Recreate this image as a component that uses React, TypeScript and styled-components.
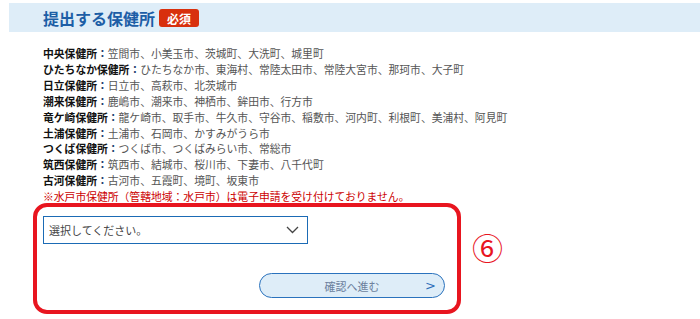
import React from "react";
import styled, { createGlobalStyle } from "styled-components";

const Global = createGlobalStyle`
  html, body { margin: 0; padding: 0; background: #fff; }
  body { font-family: "Noto Sans CJK JP", "Noto Sans", sans-serif; }
  * { box-sizing: border-box; }
`;

const Page = styled.div`
  width: 700px;
  height: 319px;
  padding: 3px 0 0 9px;
  overflow: hidden;
`;

const HeaderBand = styled.div`
  height: 29px;
  background: #deedf8;
  display: flex;
  align-items: center;
  gap: 4px;
  padding-left: 34px;
`;

const Title = styled.h2`
  margin: 0;
  font-size: 16px;
  line-height: 1;
  font-weight: 700;
  color: #1d5ea6;
`;

const Badge = styled.span`
  display: inline-flex;
  align-items: center;
  justify-content: center;
  width: 40px;
  height: 18px;
  background: #d8300d;
  color: #fff;
  font-size: 12px;
  font-weight: 700;
  border-radius: 3px;
  margin-top: 1px;
`;

const Body = styled.div`
  padding-left: 34px;
  padding-top: 14px;
`;

const List = styled.div`
  font-size: 10.8px;
  line-height: 15.9px;
  color: #555;
`;

const Line = styled.div<{ $note?: boolean }>`
  white-space: nowrap;
  color: ${(p) => (p.$note ? "#cc0000" : "#555")};
`;

const Label = styled.span`
  font-weight: 700;
  color: #111;
`;

const Colon = styled.span`
  color: #1d3f6e;
  font-weight: 700;
`;

const FormArea = styled.div`
  position: relative;
  padding-top: 11px;
`;

const SelectBox = styled.div`
  width: 265px;
  height: 28px;
  border: 1px solid #1b6bb5;
  display: flex;
  align-items: center;
  justify-content: space-between;
  padding: 0 8px 0 5px;
  font-size: 11px;
  color: #444;
  background: #fff;
`;

const NextButton = styled.button`
  position: relative;
  display: flex;
  align-items: center;
  justify-content: center;
  margin: 29px 0 0 216px;
  width: 186px;
  height: 25px;
  border: 1px solid #2a72bd;
  border-radius: 13px;
  background: #deedf8;
  color: #6b7f9c;
  font-family: "Noto Sans CJK JP", sans-serif;
  font-size: 11px;
  padding: 0;
`;

const Arrow = styled.span`
  position: absolute;
  right: 8px;
  top: 50%;
  transform: translateY(-52%);
  color: #2d6db8;
  font-family: "DejaVu Sans", sans-serif;
  font-size: 13px;
`;

const Annotation = styled.div`
  position: absolute;
  left: -10px;
  top: -2px;
  width: 428px;
  height: 111px;
  border: 4px solid #e8151f;
  border-radius: 14px;
  pointer-events: none;
`;

const Marker = styled.span`
  position: absolute;
  left: 429px;
  top: 26px;
  font-size: 31px;
  line-height: 31px;
  color: #e8151f;
`;

const rows: [string, string][] = [
  ["中央保健所", "笠間市、小美玉市、茨城町、大洗町、城里町"],
  ["ひたちなか保健所", "ひたちなか市、東海村、常陸太田市、常陸大宮市、那珂市、大子町"],
  ["日立保健所", "日立市、高萩市、北茨城市"],
  ["潮来保健所", "鹿嶋市、潮来市、神栖市、鉾田市、行方市"],
  ["竜ケ崎保健所", "龍ケ崎市、取手市、牛久市、守谷市、稲敷市、河内町、利根町、美浦村、阿見町"],
  ["土浦保健所", "土浦市、石岡市、かすみがうら市"],
  ["つくば保健所", "つくば市、つくばみらい市、常総市"],
  ["筑西保健所", "筑西市、結城市、桜川市、下妻市、八千代町"],
  ["古河保健所", "古河市、五霞町、境町、坂東市"],
];

const Chevron = () => (
  <svg width="13" height="8" viewBox="0 0 13 8">
    <polyline points="1,1 6.5,6.5 12,1" fill="none" stroke="#444" strokeWidth="1.3" />
  </svg>
);

export default function App() {
  return (
    <>
      <Global />
      <Page>
        <HeaderBand>
          <Title>提出する保健所</Title>
          <Badge>必須</Badge>
        </HeaderBand>
        <Body>
          <List>
            {rows.map(([label, towns]) => (
              <Line key={label}>
                <Label>{label}</Label>
                <Colon>：</Colon>
                {towns}
              </Line>
            ))}
            <Line $note>※水戸市保健所（管轄地域：水戸市）は電子申請を受け付けておりません。</Line>
          </List>
          <FormArea>
            <SelectBox>
              <span>選択してください。</span>
              <Chevron />
            </SelectBox>
            <NextButton>
              確認へ進む
              <Arrow>&gt;</Arrow>
            </NextButton>
            <Annotation />
            <Marker>⑥</Marker>
          </FormArea>
        </Body>
      </Page>
    </>
  );
}
